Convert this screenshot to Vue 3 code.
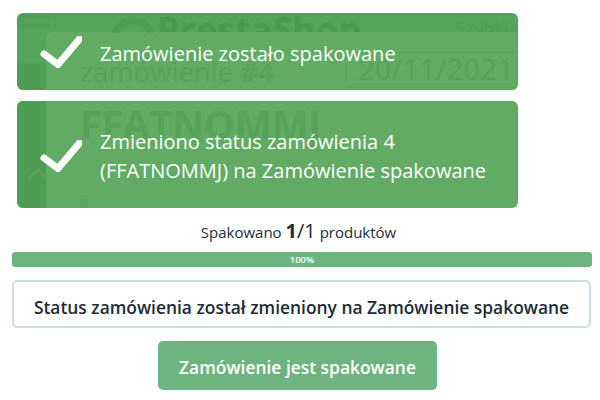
<script setup>
const percent = 100
</script>

<template>
  <main class="page">
    <section class="toast toast-one">
      <div class="ghost" aria-hidden="true">
        <span class="band band-low"></span>
        <span class="sheet"></span>
        <span class="burger"><i></i><i></i></span>
        <span class="logo-round"></span>
        <span class="ghost-brand">PrestaShop</span>
        <span class="ghost-quick">Szybki</span>
        <span class="ghost-order">zamówienie <b>#4</b></span>
        <span class="ghost-date">20/11/2021</span>
      </div>
      <svg class="check" viewBox="0 0 42 32"><path d="M4 18 L18 28.5 L39.500 3" /></svg>
      <p class="msg">Zamówienie zostało spakowane</p>
    </section>

    <section class="toast toast-two">
      <div class="ghost" aria-hidden="true">
        <span class="band"></span>
        <span class="ghost-ref">FFATNOMMJ</span>
        <svg class="ghost-chev" viewBox="0 0 24 14"><path d="M2 12 L12 3 L22 12" /></svg>
        <span class="ghost-block"></span>
      </div>
      <svg class="check" viewBox="0 0 42 32"><path d="M4 18 L18 28.5 L39.500 3" /></svg>
      <p class="msg">Zmieniono status zamówienia 4<br />(FFATNOMMJ) na Zamówienie spakowane</p>
    </section>

    <p class="packed">Spakowano <strong>1</strong><span class="total">/1</span> produktów</p>

    <div class="progress">
      <div class="bar" :style="{ width: percent + '%' }">{{ percent }}%</div>
    </div>

    <div class="status">Status zamówienia został zmieniony na Zamówienie spakowane</div>

    <button class="done" type="button">Zamówienie jest spakowane</button>
  </main>
</template>

<style>
html, body { margin: 0; background: #fff; }
</style>

<style scoped>
.page {
  width: 600px;
  height: 400px;
  box-sizing: border-box;
  padding: 13px 8px 0 12px;
  display: flex;
  flex-direction: column;
  font-family: "Open Sans", sans-serif;
  color: #212b36;
  overflow: hidden;
}
.toast {
  position: relative;
  width: 501px;
  margin-left: 5px;
  box-sizing: border-box;
  border-radius: 6px;
  overflow: hidden;
  background: #62ab64;
  color: #fff;
  display: flex;
  align-items: center;
  padding-left: 83px;
}
.toast-one { height: 77px; background: #55a25b; }
.toast-two { height: 107px; margin-top: 11px; }
.ghost { position: absolute; inset: 0; }
.ghost > * { position: absolute; }
.band { left: 0; top: 0; bottom: 0; width: 29px; background: #4f9c55; }
.band-low { top: 50px; }
.sheet { left: 29px; right: 0; top: 19px; bottom: 0; background: #62ab64; border-top-left-radius: 6px; }
.burger { left: 3px; top: 2px; width: 30px; display: flex; flex-direction: column; gap: 6px; }
.burger i { height: 3px; background: #4f9c55; }
.logo-round { left: 94px; top: 4px; width: 44px; height: 44px; border-radius: 50%; border: 7px solid #4f9c55; box-sizing: border-box; clip-path: inset(0 0 65% 0); }
.ghost-brand { left: 140px; top: -3px; font-size: 36px; line-height: 40px; font-weight: 700; color: #4c9952; height: 22px; overflow: hidden; }
.ghost-quick { left: 439px; top: 3px; font-size: 18px; line-height: 24px; height: 16px; overflow: hidden; color: #4f9c55; }
.ghost-order { left: 63px; top: 40px; font-size: 27.5px; line-height: 38px; color: #57a35c; }
.ghost-order b { font-weight: 700; }
.ghost-date {
  left: 328px; top: 39px; width: 190px; height: 36px; box-sizing: border-box;
  border: 1px solid #59a55e; border-radius: 6px;
  padding-left: 12px; font-size: 29px; line-height: 32px; letter-spacing: 0.2px; color: #57a35c;
}
.ghost-ref { left: 63px; top: 0; font-size: 39px; line-height: 46px; font-weight: 700; color: #57a35c; }
.ghost-chev { left: 9px; top: 66px; width: 24px; height: 14px; fill: none; stroke: #5ba65f; stroke-width: 2; }
.ghost-block { left: 63px; top: 98px; width: 8px; height: 9px; background: #59a55e; }
.check {
  position: absolute;
  left: 23px;
  width: 42px;
  height: 32px;
  fill: none;
  stroke: #fff;
  stroke-width: 7;
  stroke-linecap: round;
  stroke-linejoin: round;
  filter: blur(0.5px);
}
.toast-one .check { top: 23px; }
.toast-two .check { top: 39px; }
.msg {
  position: relative;
  margin: 0;
  font-size: 20px;
  line-height: 29px;
}
.toast-one .msg { top: 2px; }
.toast-two .msg { top: 1px; }
.packed {
  margin: 9px 0 0;
  height: 28px;
  padding-right: 7px;
  text-align: center;
  font-size: 15px;
  line-height: 28px;
}
.packed strong { font-size: 20px; font-weight: 700; }
.total { font-size: 20px; }
.progress {
  margin-top: 7px;
  height: 15px;
  border-radius: 3px;
  overflow: hidden;
  background: #e9ecef;
}
.bar {
  height: 100%;
  background: #6eb480;
  color: #fff;
  font-size: 9.500px;
  line-height: 15px;
  text-align: center;
  font-weight: 600;
}
.status {
  margin-top: 13px;
  width: 579px;
  height: 48px;
  box-sizing: border-box;
  border: 2px solid #cbdbe2;
  border-radius: 5px;
  text-align: center;
  font-size: 17.400px;
  font-weight: 600;
  line-height: 50px;
}
.done {
  align-self: flex-start;
  margin: 13px 0 0 146px;
  width: 279px;
  height: 49px;
  padding: 2px 0 0;
  border: 0;
  border-radius: 5px;
  background: #6eb480;
  color: #fff;
  font-family: inherit;
  font-size: 17.400px;
  font-weight: 600;
}
</style>
